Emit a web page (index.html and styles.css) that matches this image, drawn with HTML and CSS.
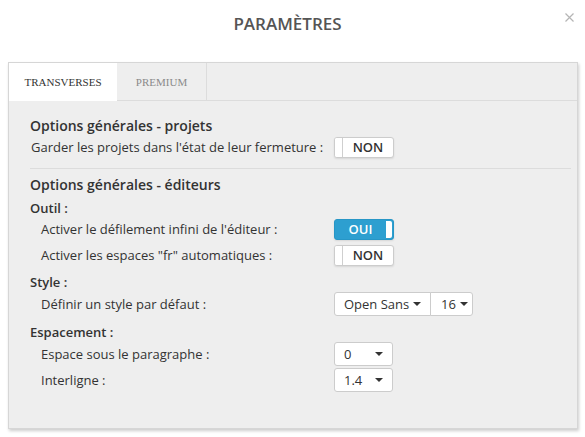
FILE: index.html
```html
<!DOCTYPE html>
<html lang="fr">

<head>
    <meta charset="UTF-8">
    <meta name="viewport" content="width=device-width, initial-scale=1.0">
    <title>Paramètres</title>
    <link rel="stylesheet" href="styles.css">
</head>

<body>

    <div class="modal">
        <div class="modal-header">
            <h1>PARAMÈTRES</h1>
            <span class="close">
                <svg width="9" height="9" viewBox="0 0 9 9"><path d="M0.5 0.5 L8.5 8.5 M8.5 0.5 L0.5 8.5" stroke="#b5b5b5" stroke-width="1.2" fill="none"/></svg>
            </span>
        </div>

        <div class="panel">
            <div class="tabs">
                <div class="tab active">TRANSVERSES</div>
                <div class="tab">PREMIUM</div>
            </div>

            <div class="tab-content">
                <h2 class="section-title first">Options générales - projets</h2>
                <div class="row row-top">
                    <span class="label">Garder les projets dans l'état de leur fermeture :</span>
                    <div class="switch off"><span class="handle"></span><span class="state">NON</span></div>
                </div>

                <hr class="divider">

                <h2 class="section-title">Options générales - éditeurs</h2>

                <h3 class="group-title">Outil :</h3>
                <div class="row">
                    <span class="label indent">Activer le défilement infini de l'éditeur :</span>
                    <div class="switch on"><span class="state">OUI</span><span class="handle"></span></div>
                </div>
                <div class="row row-gap">
                    <span class="label indent">Activer les espaces "fr" automatiques :</span>
                    <div class="switch off"><span class="handle"></span><span class="state">NON</span></div>
                </div>

                <h3 class="group-title spaced">Style :</h3>
                <div class="row row-select">
                    <span class="label indent">Définir un style par défaut :</span>
                    <div class="btn-group">
                        <div class="dropdown font-name">Open Sans <span class="caret"></span></div>
                        <div class="dropdown font-size">16 <span class="caret"></span></div>
                    </div>
                </div>

                <h3 class="group-title spaced">Espacement :</h3>
                <div class="row row-select">
                    <span class="label indent">Espace sous le paragraphe :</span>
                    <div class="dropdown single"><span>0</span><span class="caret"></span></div>
                </div>
                <div class="row row-select row-tight">
                    <span class="label indent">Interligne :</span>
                    <div class="dropdown single"><span>1.4</span><span class="caret"></span></div>
                </div>
            </div>
        </div>
    </div>

</body>

</html>
```

FILE: styles.css
```css
body {
    font-family: 'Open Sans', sans-serif;
    margin: 0;
    padding: 0;
    background-color: #ffffff;
    color: #333;
    font-size: 13px;
}

.modal {
    width: 585px;
    height: 437px;
}

.modal-header {
    position: relative;
    height: 46px;
    padding-right: 10px;
    display: flex;
    justify-content: center;
    align-items: center;
}

.modal-header h1 {
    margin: 0;
    font-size: 17px;
    font-weight: 600;
    color: #555;
}

.close {
    position: absolute;
    right: 11px;
    top: 13px;
    line-height: 0;
}

.panel {
    margin: 16px 7px 0 8px;
    height: 367px;
    box-sizing: border-box;
    background-color: #eeeeee;
    border: 1px solid #d6d6d6;
    box-shadow: 1px 2px 3px rgba(0, 0, 0, 0.2);
}

.tabs {
    display: flex;
    height: 37px;
    border-bottom: 1px solid #dcdcdc;
}

.tab {
    font-family: 'Liberation Serif', 'Times New Roman', serif;
    font-size: 11px;
    color: #8a8a8a;
    width: 90px;
    display: flex;
    justify-content: center;
    align-items: center;
    border-right: 1px solid #dcdcdc;
    box-sizing: border-box;
}

.tab.active {
    width: 108px;
    color: #333;
    background-color: #ffffff;
    border-right: none;
    margin-bottom: -1px;
}

.tab-content {
    padding: 0 6px 0 21px;
}

.section-title {
    margin: 0;
    font-size: 14px;
    font-weight: 600;
    line-height: 20px;
    color: #333;
    padding-top: 6px;
}

.section-title.first {
    padding-top: 15px;
}

.group-title {
    margin: 4px 0 0;
    font-size: 13px;
    font-weight: 600;
    line-height: 18px;
}

.group-title.spaced {
    margin-top: 7px;
}

.group-title + .row {
    margin-top: 1px;
}

.row {
    display: grid;
    grid-template-columns: 304px auto;
    align-items: center;
    height: 22px;
}

.row-top .label {
    padding-left: 1px;
}

.row-gap {
    margin-top: 4px;
}

.row-select {
    height: 24px;
}

.row-tight {
    margin-top: 2px;
}

.label.indent {
    padding-left: 11px;
}

.divider {
    border: none;
    border-top: 1px solid #dcdcdc;
    margin: 10px 0 0;
    height: 0;
}

/* switches */

.switch {
    width: 60px;
    height: 21px;
    box-sizing: border-box;
    border: 1px solid #cccccc;
    border-radius: 3px;
    display: flex;
    font-weight: 600;
    font-size: 13px;
    overflow: hidden;
    box-shadow: 0 1px 2px rgba(0, 0, 0, 0.1);
}

.switch .state {
    flex: 1;
    display: flex;
    justify-content: center;
    align-items: center;
}

.switch .handle {
    width: 7px;
    background-color: #ffffff;
}

.switch.off {
    background-color: #ffffff;
    color: #333;
}

.switch.off .handle {
    border-right: 1px solid #cfcfcf;
}

.switch.on {
    background-color: #2d9fd0;
    border-color: #2796c6;
    color: #ffffff;
}

.switch.on .handle {
    border-radius: 0 2px 2px 0;
    margin: 1px 1px 1px 0;
    width: 6px;
}

/* dropdowns */

.btn-group {
    display: flex;
    width: 139px;
}

.dropdown {
    height: 24px;
    box-sizing: border-box;
    background-color: #ffffff;
    border: 1px solid #cccccc;
    display: flex;
    align-items: center;
    font-size: 13px;
    color: #333;
}

.font-name {
    width: 97px;
    border-radius: 3px 0 0 3px;
    padding-left: 9px;
}

.font-size {
    width: 43px;
    margin-left: -1px;
    border-radius: 0 3px 3px 0;
    padding-left: 10px;
}

.caret {
    display: inline-block;
    width: 0;
    height: 0;
    border-left: 4px solid transparent;
    border-right: 4px solid transparent;
    border-top: 4px solid #333;
    margin-left: 4px;
}

.dropdown.single {
    width: 59px;
    border-radius: 3px;
    padding: 0 9px 0 9px;
    justify-content: space-between;
}
```
